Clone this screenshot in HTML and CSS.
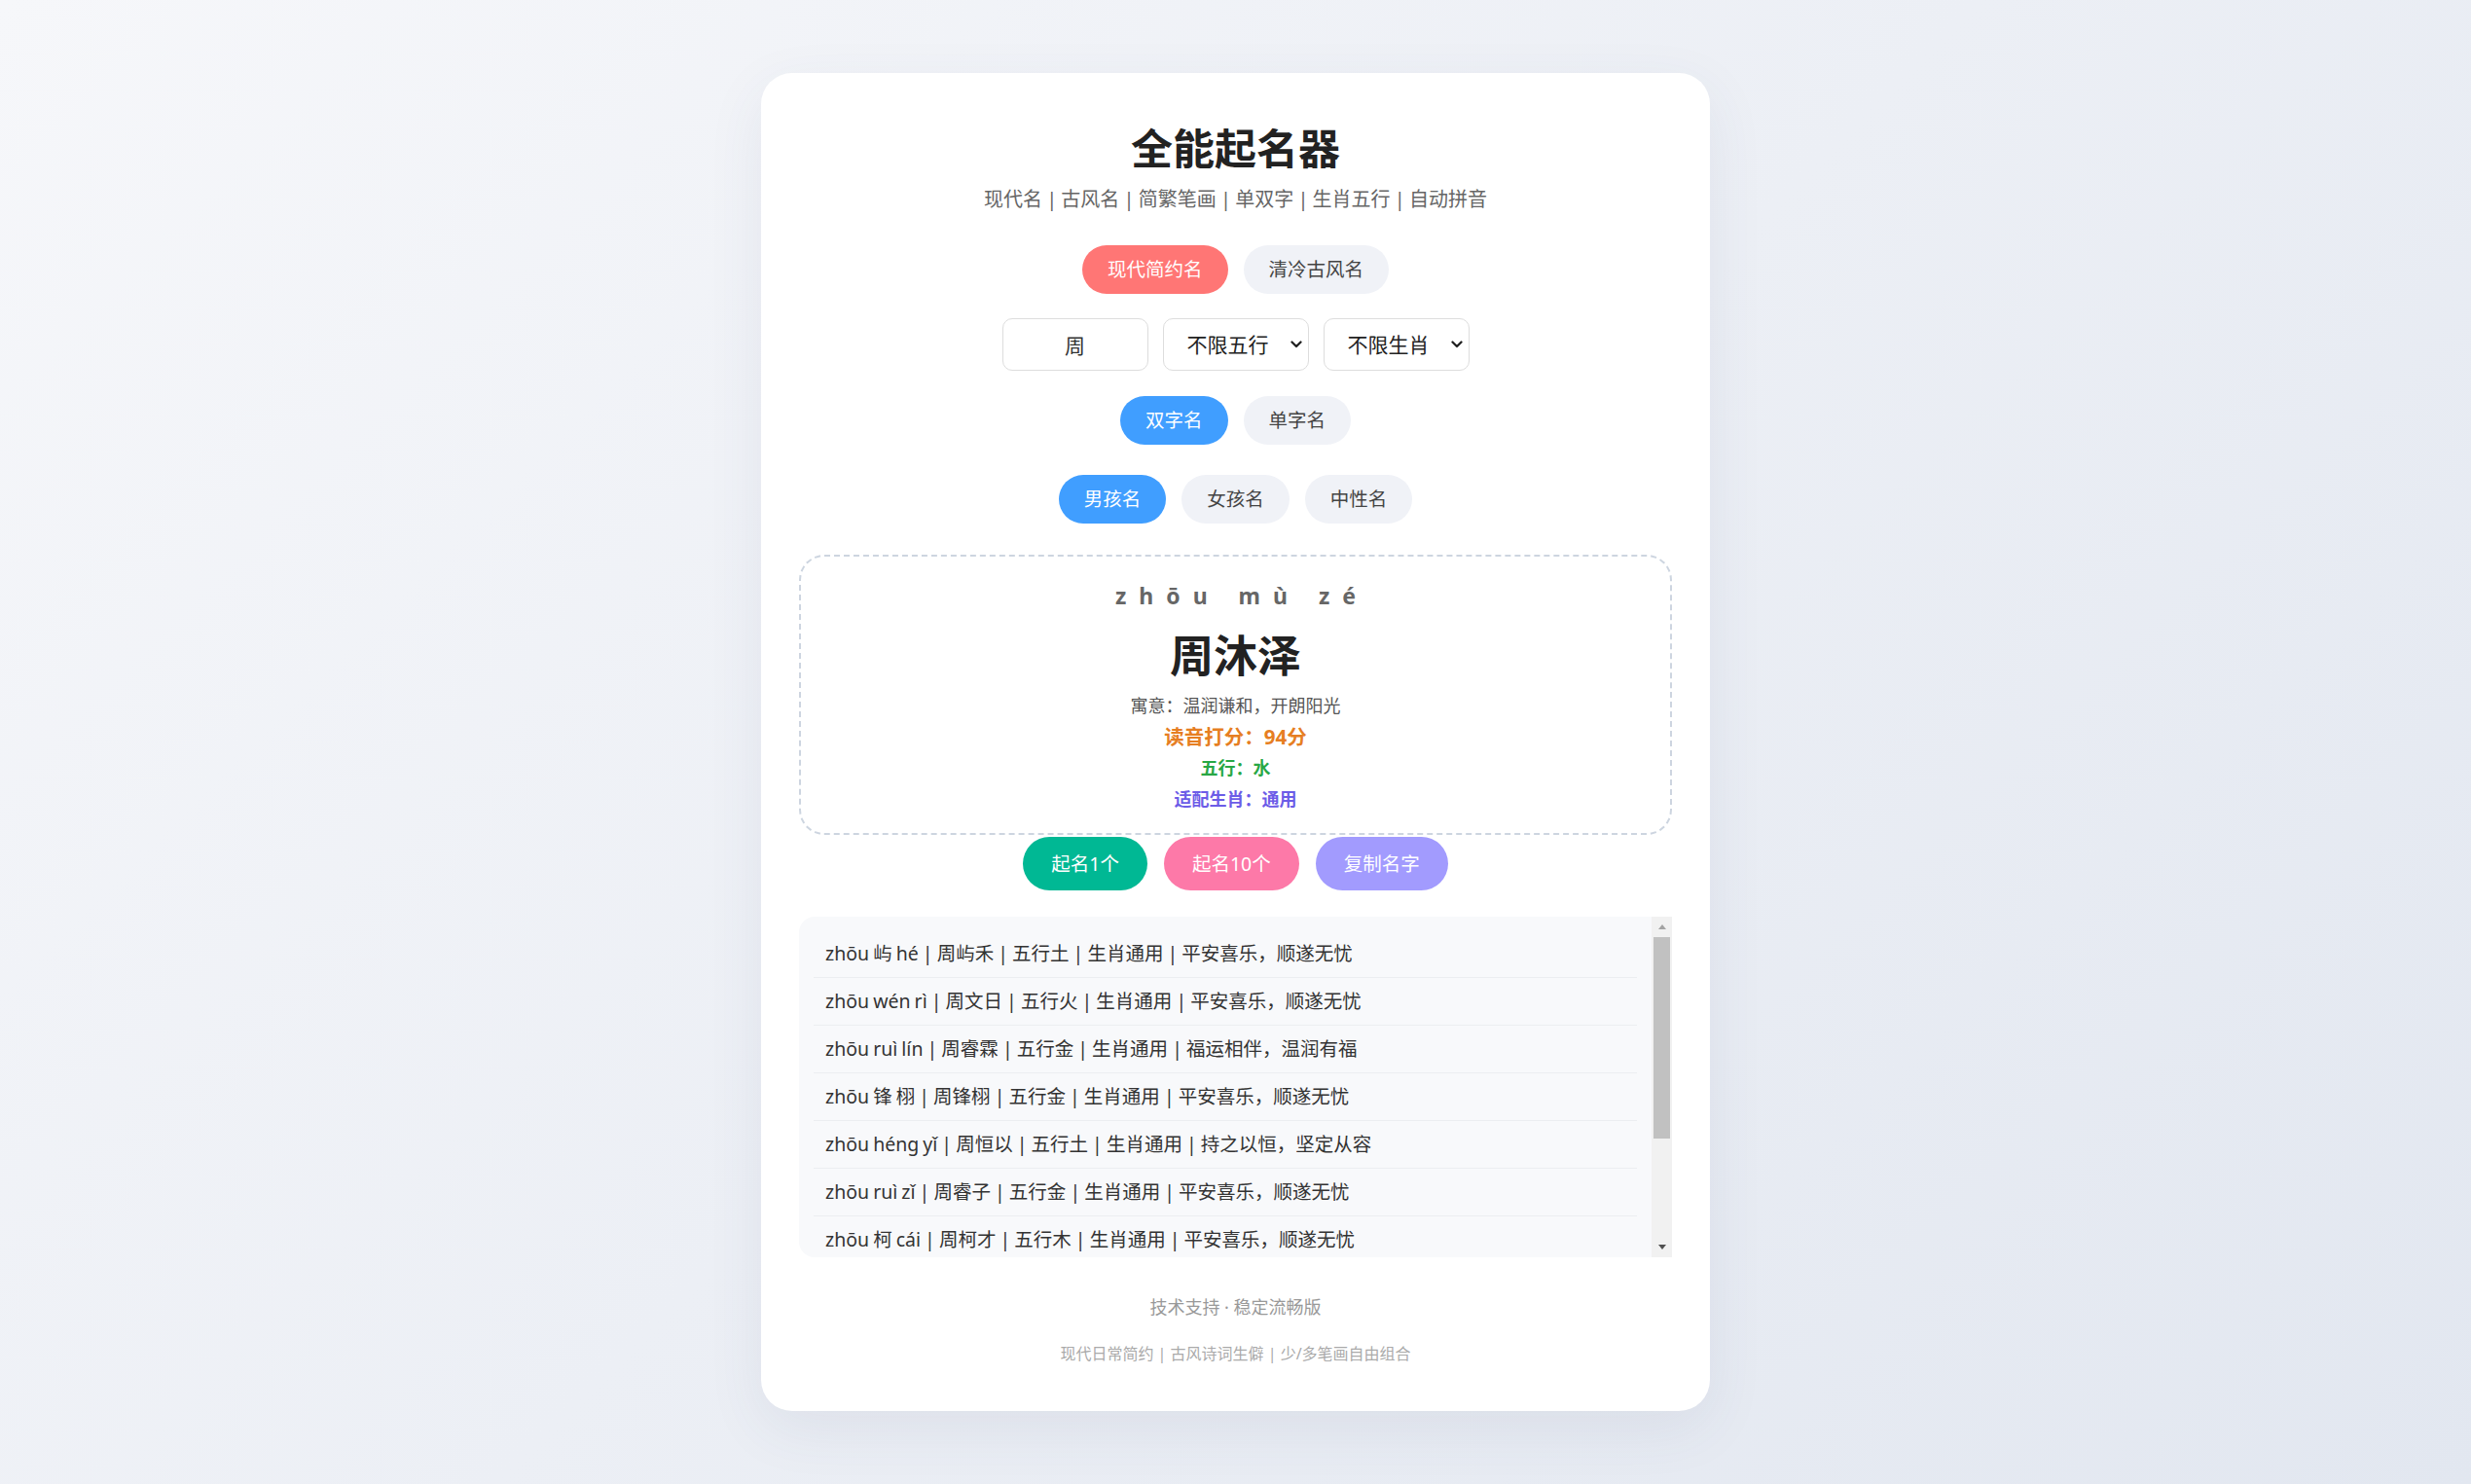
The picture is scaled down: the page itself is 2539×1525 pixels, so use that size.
FILE: index.html
```html
<!DOCTYPE html>
<html lang="zh-CN">
<head>
<meta charset="utf-8">
<title>全能起名器</title>
<link rel="stylesheet" href="styles.css">
</head>
<body>
<main class="card">
  <h1 class="title">全能起名器</h1>
  <p class="subtitle">现代名 | 古风名 | 简繁笔画 | 单双字 | 生肖五行 | 自动拼音</p>

  <div class="tabs tabs-style">
    <button class="pill pill-red">现代简约名</button>
    <button class="pill">清冷古风名</button>
  </div>

  <div class="inputs">
    <input class="field name-input" type="text" value="周">
    <div class="select-wrap">
      <select class="field select">
        <option>不限五行</option>
        <option>金</option><option>木</option><option>水</option><option>火</option><option>土</option>
      </select>
      <svg class="chevron" width="12" height="8" viewBox="0 0 12 8"><path d="M1.5 1.5 L6 6 L10.5 1.5" fill="none" stroke="#222" stroke-width="2.3" stroke-linecap="round" stroke-linejoin="round"/></svg>
    </div>
    <div class="select-wrap">
      <select class="field select">
        <option>不限生肖</option>
        <option>鼠</option><option>牛</option><option>虎</option><option>兔</option>
      </select>
      <svg class="chevron" width="12" height="8" viewBox="0 0 12 8"><path d="M1.5 1.5 L6 6 L10.5 1.5" fill="none" stroke="#222" stroke-width="2.3" stroke-linecap="round" stroke-linejoin="round"/></svg>
    </div>
  </div>

  <div class="tabs tabs-count">
    <button class="pill pill-blue">双字名</button>
    <button class="pill">单字名</button>
  </div>

  <div class="tabs tabs-gender">
    <button class="pill pill-blue">男孩名</button>
    <button class="pill">女孩名</button>
    <button class="pill">中性名</button>
  </div>

  <section class="result">
    <div class="pinyin">zhōu mù zé</div>
    <div class="name">周沐泽</div>
    <div class="meaning">寓意：温润谦和，开朗阳光</div>
    <div class="score">读音打分：94分</div>
    <div class="wuxing">五行：水</div>
    <div class="zodiac">适配生肖：通用</div>
  </section>

  <div class="actions">
    <button class="btn btn-green">起名1个</button>
    <button class="btn btn-pink">起名10个</button>
    <button class="btn btn-purple">复制名字</button>
  </div>

  <div class="list-box">
    <div class="list">
      <div class="item">zhōu 屿 hé | 周屿禾 | 五行土 | 生肖通用 | 平安喜乐，顺遂无忧</div>
      <div class="item">zhōu wén rì | 周文日 | 五行火 | 生肖通用 | 平安喜乐，顺遂无忧</div>
      <div class="item">zhōu ruì lín | 周睿霖 | 五行金 | 生肖通用 | 福运相伴，温润有福</div>
      <div class="item">zhōu 锋 栩 | 周锋栩 | 五行金 | 生肖通用 | 平安喜乐，顺遂无忧</div>
      <div class="item">zhōu héng yǐ | 周恒以 | 五行土 | 生肖通用 | 持之以恒，坚定从容</div>
      <div class="item">zhōu ruì zǐ | 周睿子 | 五行金 | 生肖通用 | 平安喜乐，顺遂无忧</div>
      <div class="item">zhōu 柯 cái | 周柯才 | 五行木 | 生肖通用 | 平安喜乐，顺遂无忧</div>
    </div>
    <div class="scrollbar" aria-hidden="true">
      <div class="sb-btn sb-up"></div>
      <div class="sb-track"><div class="sb-thumb"></div></div>
      <div class="sb-btn sb-down"></div>
    </div>
  </div>

  <p class="foot1">技术支持 · 稳定流畅版</p>
  <p class="foot2">现代日常简约 | 古风诗词生僻 | 少/多笔画自由组合</p>
</main>
</body>
</html>
```
FILE: styles.css
```css
* { box-sizing: border-box; }

html, body { margin: 0; }

body {
  min-height: 100vh;
  padding: 75px 0 0;
  background: linear-gradient(135deg, #f6f7fa 0%, #e2e7f0 100%);
  font-family: "Noto Sans", "Noto Sans CJK SC", sans-serif;
  color: #333;
}

.card {
  width: 975px;
  margin: 0 auto;
  background: #fff;
  border-radius: 32px;
  box-shadow: 0 18px 60px rgba(60, 80, 120, 0.08);
  padding: 50px 39px 47px;
}

.title {
  margin: 0;
  text-align: center;
  font-size: 43px;
  line-height: 56px;
  font-weight: 700;
  color: #222;
}

.subtitle {
  margin: 9px 0 0;
  text-align: center;
  font-size: 20px;
  line-height: 30px;
  color: #666;
  word-spacing: -1px;
}

.tabs {
  display: flex;
  justify-content: center;
  gap: 16px;
}
.tabs-style { margin-top: 32px; }
.tabs-count { margin-top: 26px; }
.tabs-gender { margin-top: 31px; }

.pill {
  height: 50px;
  padding: 0 26px;
  border: none;
  border-radius: 25px;
  font-family: inherit;
  font-size: 19.5px;
  line-height: 50px;
  background: #f0f2f7;
  color: #444;
}
.pill-red { background: #ff7675; color: #fff; }
.pill-blue { background: #409eff; color: #fff; }

.inputs {
  display: flex;
  justify-content: center;
  gap: 15px;
  margin-top: 25px;
}

.field {
  display: block;
  width: 150px;
  height: 54px;
  margin: 0;
  border: 1px solid #ddd;
  border-radius: 10px;
  background: #fff;
  font-family: inherit;
  font-size: 21px;
  color: #333;
  outline: none;
}
.name-input { text-align: center; padding: 0 10px; }

.select-wrap { position: relative; }
.select {
  appearance: none;
  -webkit-appearance: none;
  padding: 0 28px 0 24px;
  color: #222;
}
.chevron {
  position: absolute;
  right: 7px;
  top: 23px;
  pointer-events: none;
}

.result {
  margin-top: 32px;
  border: 2px dashed #cdd5e0;
  border-radius: 26px;
  padding: 23px 20px 19px;
  text-align: center;
}
.pinyin {
  font-size: 23px;
  line-height: 34px;
  font-weight: 700;
  color: #666;
  letter-spacing: 13px;
  padding-left: 13px;
}
.name {
  margin-top: 15px;
  font-size: 45px;
  line-height: 60px;
  font-weight: 700;
  color: #222;
}
.meaning {
  margin-top: 5px;
  font-size: 18px;
  line-height: 32px;
  color: #555;
}
.score {
  font-size: 20.5px;
  line-height: 32px;
  font-weight: 700;
  color: #e67e22;
}
.wuxing {
  font-size: 18px;
  line-height: 32px;
  font-weight: 700;
  color: #28a745;
}
.zodiac {
  font-size: 18px;
  line-height: 32px;
  font-weight: 700;
  color: #6c5ce7;
}

.actions {
  display: flex;
  justify-content: center;
  gap: 17px;
  margin-top: 2px;
}
.btn {
  height: 55px;
  padding: 0 29px;
  border: none;
  border-radius: 28px;
  font-family: inherit;
  font-size: 19.5px;
  line-height: 55px;
  color: #fff;
}
.btn-green { background: #00b894; }
.btn-pink { background: #fd79a8; }
.btn-purple { background: #a29bfe; }

.list-box {
  margin-top: 27px;
  height: 350px;
  display: flex;
  background: #f8f9fb;
  border-radius: 16px 0 0 16px;
  overflow: hidden;
}
.list {
  flex: 1;
  min-width: 0;
  overflow: hidden;
  padding: 14px 15px 0;
}
.item {
  height: 49px;
  padding: 0 12px;
  line-height: 48px;
  border-bottom: 1px solid #eceef1;
  font-size: 19.5px;
  color: #333;
  white-space: nowrap;
  word-spacing: -1px;
}

.scrollbar {
  width: 21px;
  flex: none;
  display: flex;
  flex-direction: column;
  background: #f1f1f1;
}
.sb-btn {
  height: 21px;
  flex: none;
  display: flex;
  align-items: center;
  justify-content: center;
}
.sb-up::before {
  content: "";
  border-left: 4.5px solid transparent;
  border-right: 4.5px solid transparent;
  border-bottom: 5px solid #a3a3a3;
}
.sb-down::before {
  content: "";
  border-left: 4.5px solid transparent;
  border-right: 4.5px solid transparent;
  border-top: 5px solid #505050;
}
.sb-track {
  flex: 1;
  padding: 0 2px;
}
.sb-thumb {
  height: 207px;
  background: #c1c1c1;
}

.foot1 {
  margin: 38px 0 0;
  text-align: center;
  font-size: 18px;
  line-height: 26px;
  color: #999;
}
.foot2 {
  margin: 23px 0 0;
  text-align: center;
  font-size: 16px;
  line-height: 24px;
  color: #aaa;
}
```
